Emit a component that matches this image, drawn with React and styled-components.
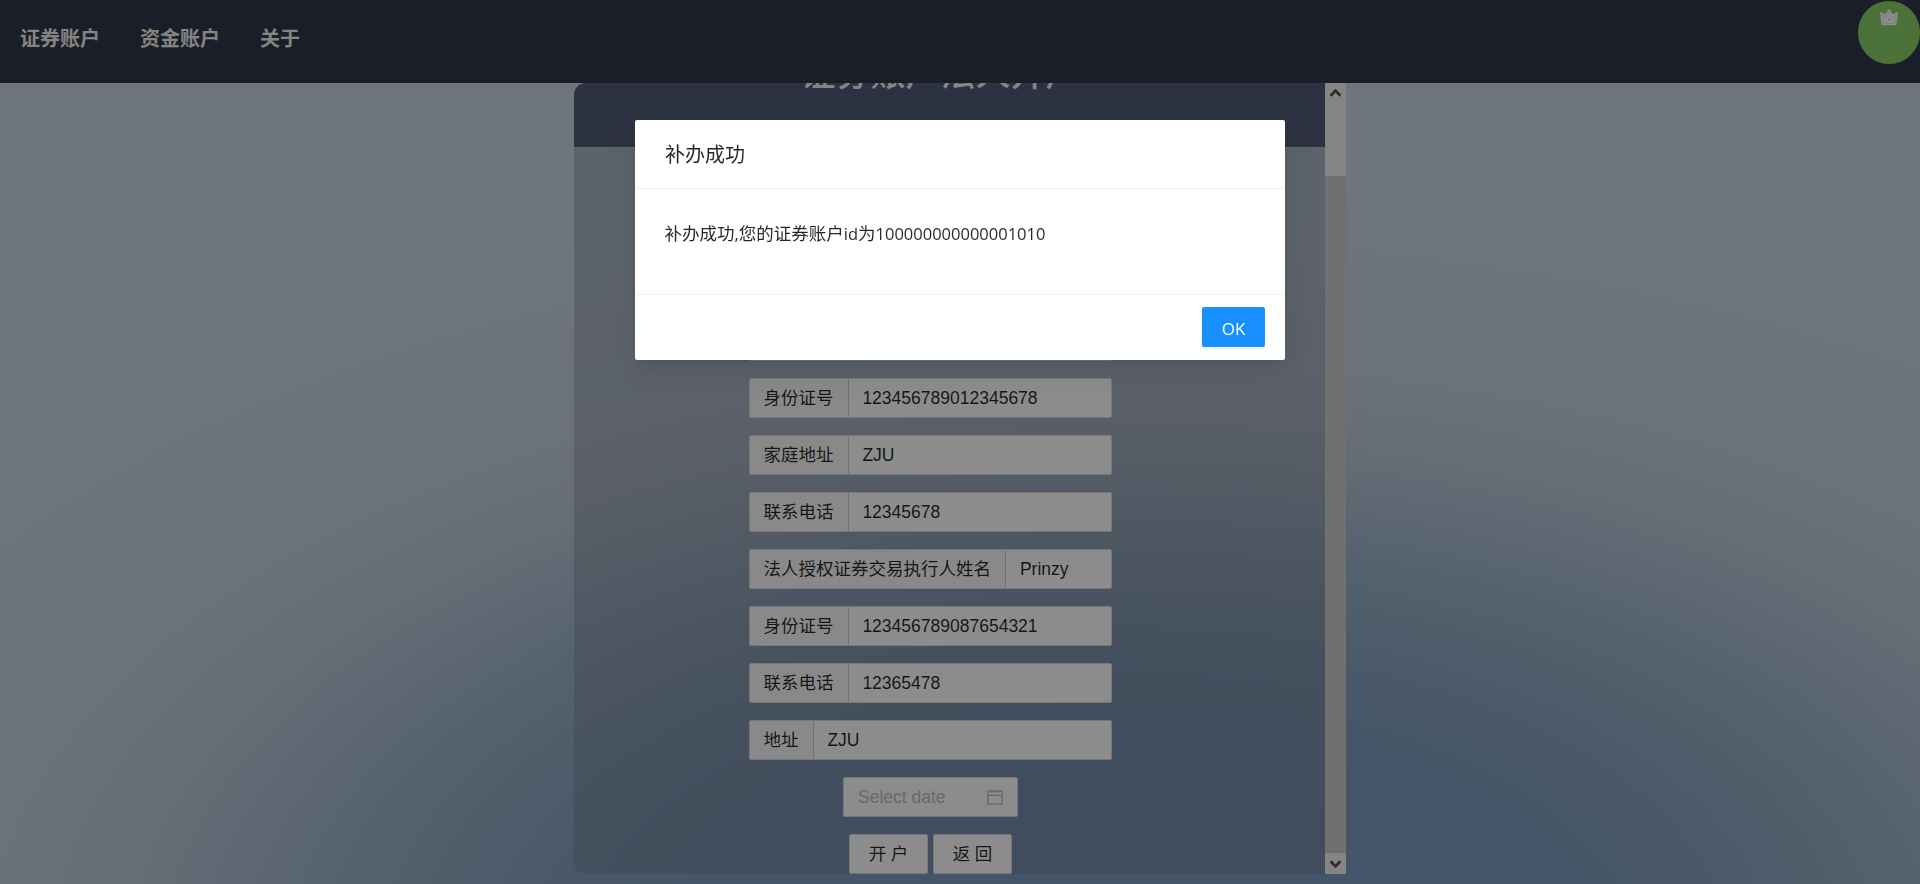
import React from 'react';
import styled, { createGlobalStyle } from 'styled-components';
import { AiOutlineCalendar } from 'react-icons/ai';

const GlobalStyle = createGlobalStyle`
  *, *::before, *::after { box-sizing: border-box; }
  html, body { margin: 0; padding: 0; }
  body {
    overflow: hidden;
    font-family: "Liberation Sans", "Noto Sans CJK SC", sans-serif;
    font-size: 17.5px;
    color: rgba(0, 0, 0, 0.85);
  }
`;

const Page = styled.div`
  height: 884px;
  display: flex;
  flex-direction: column;
  background: radial-gradient(
    ellipse 1150px 600px at 1130px 960px,
    #7c9bc2 0%,
    #7c9bc0 30%,
    #7f9ebd 42%,
    #8aa4c0 54%,
    #9cb4ca 70%,
    #adbfd2 80%,
    #bdc9d9 90%,
    #c4cfdf 100%,
    #c8d5e3 130%
  );
`;

const Header = styled.header`
  flex: none;
  height: 83px;
  display: flex;
  align-items: flex-start;
  justify-content: space-between;
  background: #31374a;
`;

const Nav = styled.nav`
  display: flex;
  gap: 40px;
  padding: 23px 0 0 20px;
`;

const NavLink = styled.a`
  font: bold 20px/30px "Noto Sans CJK SC", sans-serif;
  color: #f0f0ec;
`;

const Avatar = styled.div`
  width: 62.5px;
  height: 62.5px;
  margin-top: 1px;
  padding-top: 7px;
  border-radius: 50%;
  display: flex;
  justify-content: center;
  background: #87d068;
`;

const Crown = styled.svg`
  width: 20px;
  height: 20px;
`;

const Panel = styled.section`
  width: 772px;
  height: 791px;
  margin: 0 auto;
  display: flex;
  overflow: hidden;
  border-radius: 12px 0 0 12px;
`;

const PanelContent = styled.div`
  flex: 1;
  background: rgba(102, 108, 126, 0.3);
`;

const TitleBand = styled.div`
  height: 64px;
  overflow: hidden;
  background: #535c79;
`;

const Title = styled.h1`
  margin: -37px 18px 0 0;
  font: 500 35px/50px "Noto Sans CJK SC", sans-serif;
  text-align: center;
  color: #f2f2ee;
`;

const Form = styled.form`
  display: flex;
  flex-direction: column;
  align-items: center;
  gap: 17px;
  padding: 174px 38px 0 0;
`;

const InputGroup = styled.label`
  width: 363px;
  height: 40px;
  display: flex;
  border: 1px solid #d9d9d9;
  border-radius: 2px;
  background: #fff;
`;

const Addon = styled.span`
  padding: 0 14.3px 0 13.6px;
  border-right: 1px solid #d0d0d0;
  background: #fafafa;
  font: 17.5px/36px "Noto Sans CJK SC", sans-serif;
  white-space: nowrap;
`;

const Value = styled.span`
  padding: 0 13.5px;
  line-height: 38px;
`;

const DateInput = styled.div`
  width: 175px;
  height: 40px;
  display: flex;
  align-items: center;
  justify-content: space-between;
  padding: 0 12px 0 14px;
  border: 1px solid #d9d9d9;
  border-radius: 2px;
  background: #fff;
  color: #bfbfbf;
`;

const ButtonRow = styled.div`
  display: flex;
  gap: 5px;
`;

const PlainButton = styled.button`
  width: 79px;
  height: 40px;
  padding: 0 0 3px;
  border: 1px solid #d9d9d9;
  border-radius: 2px;
  background: #fff;
  color: rgba(0, 0, 0, 0.85);
  font: 17.5px/34px "Noto Sans CJK SC", sans-serif;
  word-spacing: 0.5px;
`;

const Scrollbar = styled.div`
  flex: none;
  width: 21px;
  display: flex;
  flex-direction: column;
  background: #f1f1f1;
`;

const Thumb = styled.div`
  flex: 1;
  margin-top: 72px;
  background: #cdcdcd;
`;

const ScrollArrow = styled.svg`
  flex: none;
  width: 21px;
  height: 21px;
  fill: none;
  stroke: #505050;
  stroke-width: 2.7;
`;

const Mask = styled.div`
  position: fixed;
  inset: 0;
  display: flex;
  justify-content: center;
  align-items: flex-start;
  padding-top: 120px;
  background: rgba(0, 0, 0, 0.45);
`;

const Dialog = styled.div`
  width: 650px;
  height: 240px;
  display: flex;
  flex-direction: column;
  border-radius: 2px;
  background: #fff;
  box-shadow: 0 4px 8px -5px rgba(0, 0, 0, 0.12), 0 8px 20px rgba(0, 0, 0, 0.08),
    0 11px 35px 10px rgba(0, 0, 0, 0.05);
  font-family: "Noto Sans CJK SC", sans-serif;
`;

const DialogTitle = styled.div`
  height: 69px;
  padding: 19px 30px;
  border-bottom: 1px solid #f0f0f0;
  font-size: 20px;
  line-height: 30px;
`;

const DialogBody = styled.div`
  flex: 1;
  padding: 30px 29.5px;
  line-height: 27.5px;
`;

const Latin = styled.span`
  font-family: "Open Sans", sans-serif;
  font-size: 16.5px;
`;

const DialogFooter = styled.div`
  height: 66px;
  display: flex;
  justify-content: flex-end;
  padding: 12px 20px;
  border-top: 1px solid #f0f0f0;
`;

const PrimaryButton = styled.button`
  width: 63px;
  height: 40px;
  padding: 3px 0 0;
  border: 0;
  border-radius: 2px;
  background: #1890ff;
  box-shadow: 0 2.5px 0 rgba(0, 0, 0, 0.045);
  color: #fff;
  font: 17px/37px "Open Sans", sans-serif;
`;

const fields = [
  ['', ''],
  ['身份证号', '123456789012345678'],
  ['家庭地址', 'ZJU'],
  ['联系电话', '12345678'],
  ['法人授权证券交易执行人姓名', 'Prinzy'],
  ['身份证号', '123456789087654321'],
  ['联系电话', '12365478'],
  ['地址', 'ZJU'],
];

export default function App() {
  return (
    <>
      <GlobalStyle />
      <Page>
        <Header>
          <Nav>
            <NavLink>证券账户</NavLink>
            <NavLink>资金账户</NavLink>
            <NavLink>关于</NavLink>
          </Nav>
          <Avatar>
            <Crown viewBox="0 0 20 20">
              <path fill="#fff" d="M1 3.8 6 6.3 10 1l4 5.3 5-2.5-1.6 13.4H2.6z" />
              <path fill="none" stroke="#e3e8e0" strokeWidth="0.8" d="M3.5 7.2 6.6 8.8 10 4.2l3.4 4.6 3.1-1.6-1 8H4.5z" />
              <circle cx="10" cy="11.6" r="0.9" fill="#87d068" />
            </Crown>
          </Avatar>
        </Header>
        <Panel>
          <PanelContent>
            <TitleBand><Title>证券账户法人开户</Title></TitleBand>
            <Form>
              {fields.map(([label, value], i) => (
                <InputGroup key={i}>
                  <Addon>{label}</Addon>
                  <Value>{value}</Value>
                </InputGroup>
              ))}
              <DateInput>
                Select date
                <AiOutlineCalendar size={20} />
              </DateInput>
              <ButtonRow>
                <PlainButton type="button">开 户</PlainButton>
                <PlainButton type="button">返 回</PlainButton>
              </ButtonRow>
            </Form>
          </PanelContent>
          <Scrollbar>
            <ScrollArrow viewBox="0 0 21 21"><path d="M5.6 12.8 10.5 7.6 15.4 12.8" /></ScrollArrow>
            <Thumb />
            <ScrollArrow viewBox="0 0 21 21"><path d="M5.6 8.2 10.5 13.4 15.4 8.2" /></ScrollArrow>
          </Scrollbar>
        </Panel>
      </Page>
      <Mask>
        <Dialog>
          <DialogTitle>补办成功</DialogTitle>
          <DialogBody>
            补办成功<Latin>,</Latin>您的证券账户<Latin>id</Latin>为<Latin>100000000000001010</Latin>
          </DialogBody>
          <DialogFooter>
            <PrimaryButton type="button">OK</PrimaryButton>
          </DialogFooter>
        </Dialog>
      </Mask>
    </>
  );
}
